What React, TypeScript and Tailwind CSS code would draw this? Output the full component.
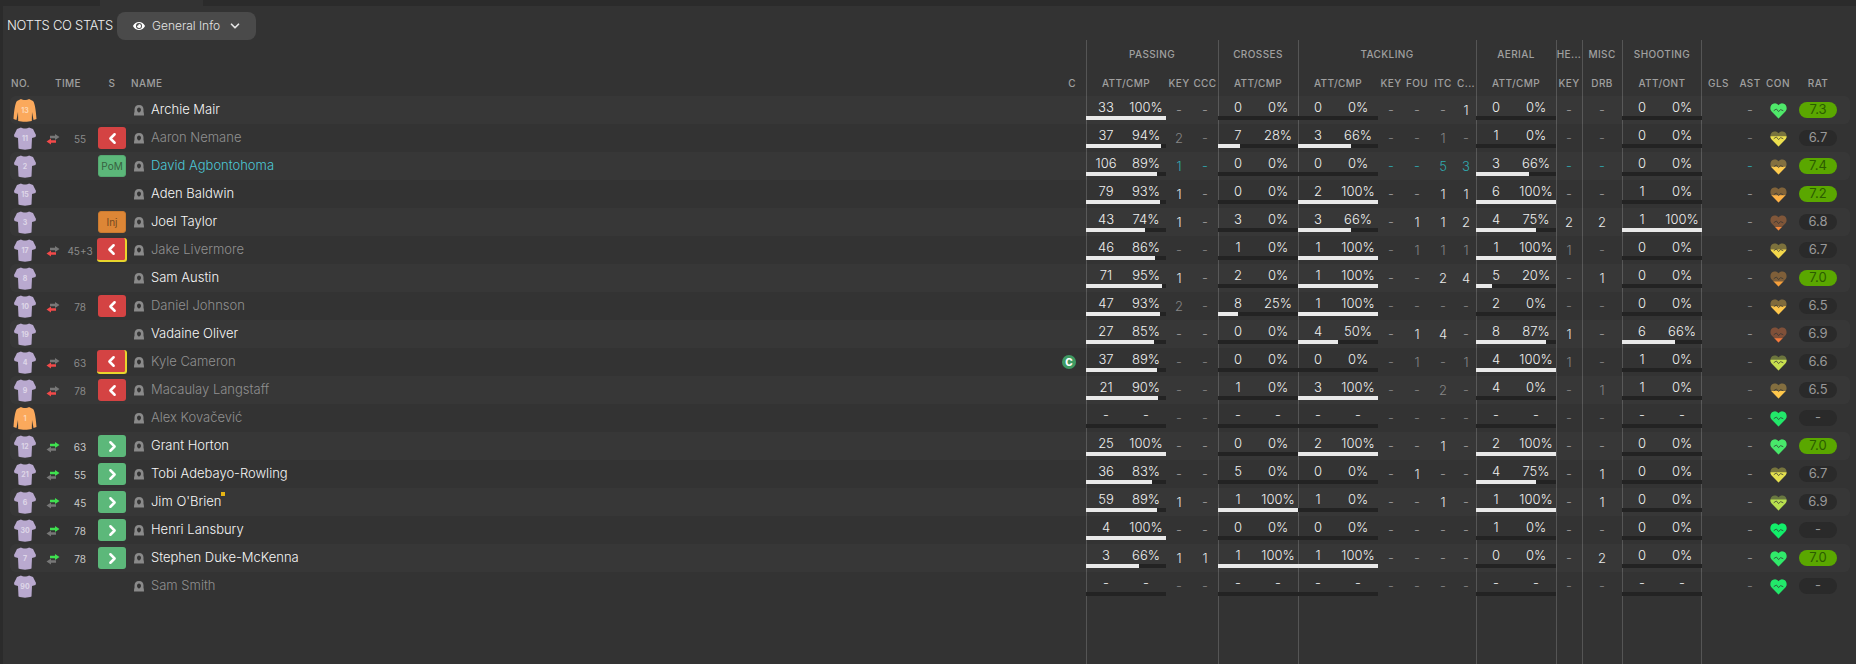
import { FaEye } from "react-icons/fa";
import { FiChevronDown, FiChevronLeft, FiChevronRight } from "react-icons/fi";

const COLS =
  "grid grid-cols-[30px_26px_28px_36px_928px_28px_80px_26px_26px_80px_80px_26px_26px_26px_20px_80px_26px_40px_80px_33px_30px_26px_54px_5px]";

type Pair = [string, string, number];

type Player = {
  no: string;
  name: string;
  gk?: boolean;
  sub?: "out" | "in";
  time?: string;
  badge?: "out" | "outY" | "in" | "pom" | "inj";
  tone?: "dim" | "teal";
  pass: Pair;
  key: string;
  ccc: string;
  cross: Pair;
  tack: Pair;
  tk: [string, string, string, string];
  aer: Pair;
  he: string;
  drb: string;
  sht: Pair;
  heart: [string, number];
  rat: string;
  capt?: boolean;
  dot?: boolean;
};

const p = (a: string, b: string): Pair => [a, b, b === "-" ? 0 : parseInt(b)];
const Z = p("0", "0%");
const N = p("-", "-");

const players: Player[] = [
  { no: "13", name: "Archie Mair", gk: true, pass: p("33", "100%"), key: "-", ccc: "-", cross: Z, tack: Z, tk: ["-", "-", "-", "1"], aer: Z, he: "-", drb: "-", sht: Z, heart: ["#4fe86a", 1], rat: "7.3" },
  { no: "11", name: "Aaron Nemane", sub: "out", time: "55", badge: "out", tone: "dim", pass: p("37", "94%"), key: "2", ccc: "-", cross: p("7", "28%"), tack: p("3", "66%"), tk: ["-", "-", "1", "-"], aer: p("1", "0%"), he: "-", drb: "-", sht: Z, heart: ["#ece04f", 0.68], rat: "6.7" },
  { no: "2", name: "David Agbontohoma", badge: "pom", tone: "teal", pass: p("106", "89%"), key: "1", ccc: "-", cross: Z, tack: Z, tk: ["-", "-", "5", "3"], aer: p("3", "66%"), he: "-", drb: "-", sht: Z, heart: ["#ffcc4f", 0.52], rat: "7.4" },
  { no: "15", name: "Aden Baldwin", pass: p("79", "93%"), key: "1", ccc: "-", cross: Z, tack: p("2", "100%"), tk: ["-", "-", "1", "1"], aer: p("6", "100%"), he: "-", drb: "-", sht: p("1", "0%"), heart: ["#ffb347", 0.48], rat: "7.2" },
  { no: "3", name: "Joel Taylor", badge: "inj", pass: p("43", "74%"), key: "1", ccc: "-", cross: p("3", "0%"), tack: p("3", "66%"), tk: ["-", "1", "1", "2"], aer: p("4", "75%"), he: "2", drb: "2", sht: p("1", "100%"), heart: ["#f58a3c", 0.25], rat: "6.8" },
  { no: "17", name: "Jake Livermore", sub: "out", time: "45+3", badge: "outY", tone: "dim", pass: p("46", "86%"), key: "-", ccc: "-", cross: p("1", "0%"), tack: p("1", "100%"), tk: ["-", "1", "1", "1"], aer: p("1", "100%"), he: "1", drb: "-", sht: Z, heart: ["#f4d84c", 0.6], rat: "6.7" },
  { no: "8", name: "Sam Austin", pass: p("71", "95%"), key: "1", ccc: "-", cross: p("2", "0%"), tack: p("1", "100%"), tk: ["-", "-", "2", "4"], aer: p("5", "20%"), he: "-", drb: "1", sht: Z, heart: ["#f5a03c", 0.35], rat: "7.0" },
  { no: "10", name: "Daniel Johnson", sub: "out", time: "78", badge: "out", tone: "dim", pass: p("47", "93%"), key: "2", ccc: "-", cross: p("8", "25%"), tack: p("1", "100%"), tk: ["-", "-", "-", "-"], aer: p("2", "0%"), he: "-", drb: "-", sht: Z, heart: ["#ffc84c", 0.55], rat: "6.5" },
  { no: "19", name: "Vadaine Oliver", pass: p("27", "85%"), key: "-", ccc: "-", cross: Z, tack: p("4", "50%"), tk: ["-", "1", "4", "-"], aer: p("8", "87%"), he: "1", drb: "-", sht: p("6", "66%"), heart: ["#f57a3c", 0.3], rat: "6.9" },
  { no: "4", name: "Kyle Cameron", sub: "out", time: "63", badge: "outY", tone: "dim", capt: true, pass: p("37", "89%"), key: "-", ccc: "-", cross: Z, tack: Z, tk: ["-", "1", "-", "1"], aer: p("4", "100%"), he: "1", drb: "-", sht: p("1", "0%"), heart: ["#c8e04f", 0.7], rat: "6.6" },
  { no: "9", name: "Macaulay Langstaff", sub: "out", time: "78", badge: "out", tone: "dim", pass: p("21", "90%"), key: "-", ccc: "-", cross: p("1", "0%"), tack: p("3", "100%"), tk: ["-", "-", "2", "-"], aer: p("4", "0%"), he: "-", drb: "1", sht: p("1", "0%"), heart: ["#ffc84c", 0.5], rat: "6.5" },
  { no: "1", name: "Alex Kovačević", gk: true, tone: "dim", pass: N, key: "-", ccc: "-", cross: N, tack: N, tk: ["-", "-", "-", "-"], aer: N, he: "-", drb: "-", sht: N, heart: ["#22e86a", 1], rat: "-" },
  { no: "12", name: "Grant Horton", sub: "in", time: "63", badge: "in", pass: p("25", "100%"), key: "-", ccc: "-", cross: Z, tack: p("2", "100%"), tk: ["-", "-", "1", "-"], aer: p("2", "100%"), he: "-", drb: "-", sht: Z, heart: ["#48e86a", 1], rat: "7.0" },
  { no: "21", name: "Tobi Adebayo-Rowling", sub: "in", time: "55", badge: "in", pass: p("36", "83%"), key: "-", ccc: "-", cross: p("5", "0%"), tack: Z, tk: ["-", "1", "-", "-"], aer: p("4", "75%"), he: "-", drb: "1", sht: Z, heart: ["#e4e04f", 0.68], rat: "6.7" },
  { no: "6", name: "Jim O'Brien", sub: "in", time: "45", badge: "in", dot: true, pass: p("59", "89%"), key: "1", ccc: "-", cross: p("1", "100%"), tack: p("1", "0%"), tk: ["-", "-", "1", "-"], aer: p("1", "100%"), he: "-", drb: "1", sht: Z, heart: ["#b8e04f", 0.72], rat: "6.9" },
  { no: "30", name: "Henri Lansbury", sub: "in", time: "78", badge: "in", pass: p("4", "100%"), key: "-", ccc: "-", cross: Z, tack: Z, tk: ["-", "-", "-", "-"], aer: p("1", "0%"), he: "-", drb: "-", sht: Z, heart: ["#12ee6a", 1], rat: "-" },
  { no: "7", name: "Stephen Duke-McKenna", sub: "in", time: "78", badge: "in", pass: p("3", "66%"), key: "1", ccc: "1", cross: p("1", "100%"), tack: p("1", "100%"), tk: ["-", "-", "-", "-"], aer: Z, he: "-", drb: "2", sht: Z, heart: ["#30ea6a", 1], rat: "7.0" },
  { no: "90", name: "Sam Smith", tone: "dim", pass: N, key: "-", ccc: "-", cross: N, tack: N, tk: ["-", "-", "-", "-"], aer: N, he: "-", drb: "-", sht: N, heart: ["#22e86a", 1], rat: "-" },
];

const Shirt = ({ no, gk }: { no: string; gk?: boolean }) => (
  <svg viewBox="0 0 24 24" className="w-6 h-6">
    {gk ? (
      <path
        fill="#fba95c"
        d="M8 1 C10 2.4 14 2.4 16 1 L20 3 C22 5 23 14 23.5 21 L20.5 22 L19 14 L18.8 23 C15 24 9 24 5.2 23 L5 14 L3.5 22 L0.5 21 C1 14 2 5 4 3 Z"
      />
    ) : (
      <path
        fill="#b9a9cf"
        d="M8 1.5 C10 2.8 14 2.8 16 1.5 L20 3 L23 9 L22.5 11 L19 12 L18.5 22.5 C15 24 9 24 5.5 22.5 L5 12 L1.5 11 L1 9 L4 3 Z"
      />
    )}
    <text
      x="12"
      y="14.5"
      textAnchor="middle"
      fontSize="7"
      fontWeight="700"
      fill="#ffffff"
      fillOpacity="0.55"
      fontFamily="Inter, sans-serif"
    >
      {no}
    </text>
  </svg>
);

const SubArrows = ({ kind }: { kind: "out" | "in" }) => (
  <svg viewBox="0 0 14 11" className="w-[14px] h-[11px]">
    <path fill={kind === "in" ? "#3fe04f" : "#777777"} d="M4 1.8 H9 V0 L13.5 3 L9 6 V4.2 H4 Z" />
    <path fill={kind === "in" ? "#777777" : "#f24a4a"} d="M10 6.3 H5 V4.5 L0.5 7.5 L5 10.5 V8.7 H10 Z" />
  </svg>
);

const Person = () => (
  <svg viewBox="0 0 10 11" className="w-[10px] h-[11px] shrink-0">
    <path
      fill="#8a8a8a"
      fillRule="evenodd"
      d="M5 0 C8 0 9.5 2 9.5 4.5 L9.5 7 C9.9 7.6 10 9 10 10.5 L0 10.5 C0 9 .1 7.6 .5 7 L.5 4.5 C.5 2 2 0 5 0 Z M5 2.4 C3.8 2.4 3 3.4 3 4.8 C3 6.3 3.9 7.4 5 7.4 C6.1 7.4 7 6.3 7 4.8 C7 3.4 6.2 2.4 5 2.4 Z"
    />
  </svg>
);

const Heart = ({ color, level, id }: { color: string; level: number; id: string }) => (
  <svg viewBox="0 0 16 16" className="w-[17px] h-[17px]">
    <defs>
      <clipPath id={id}>
        <rect x="0" y={16 - 15 * level} width="16" height="16" />
      </clipPath>
    </defs>
    <path
      fill={color}
      fillOpacity="0.38"
      d="M8 15.5 L1.4 8.8 C-0.6 6.2 0.4 2 4 1.5 C5.8 1.3 7 2 8 3 C9 2 10.2 1.3 12 1.5 C15.6 2 16.6 6.2 14.6 8.8 Z"
    />
    <path
      fill={color}
      clipPath={`url(#${id})`}
      d="M8 15.5 L1.4 8.8 C-0.6 6.2 0.4 2 4 1.5 C5.8 1.3 7 2 8 3 C9 2 10.2 1.3 12 1.5 C15.6 2 16.6 6.2 14.6 8.8 Z"
    />
    <path fill="none" stroke="#333333" strokeWidth="0.7" d="M3.5 8.2 L6 6.6 L8 9 L10 7.2 L12.5 8.2" />
  </svg>
);

const StatusBadge = ({ kind }: { kind?: Player["badge"] }) => {
  if (!kind) return null;
  if (kind === "pom")
    return (
      <div className="w-7 h-[22px] rounded-[3px] bg-[#5cb87a] border border-[#55a871] flex items-center justify-center text-[10px] text-[#37603f]">
        PoM
      </div>
    );
  if (kind === "inj")
    return (
      <div className="w-7 h-[22px] rounded-[3px] bg-[#dd8636] border border-[#c97a30] flex items-center justify-center text-[10px] text-[#74491f]">
        Inj
      </div>
    );
  if (kind === "in")
    return (
      <div className="w-7 h-[22px] rounded-[3px] bg-[#5cb87a] flex items-center justify-center text-white">
        <FiChevronRight className="w-[17px] h-[17px]" strokeWidth={3.5} />
      </div>
    );
  if (kind === "outY")
    return (
      <div className="w-[30px] h-6 rounded-[3px] bg-[#d44343] border-r-2 border-b-2 border-[#e8d52c] flex items-center justify-center text-white">
        <FiChevronLeft className="w-[17px] h-[17px]" strokeWidth={3.5} />
      </div>
    );
  return (
    <div className="w-7 h-[22px] rounded-[3px] bg-[#d44343] flex items-center justify-center text-white">
      <FiChevronLeft className="w-[17px] h-[17px]" strokeWidth={3.5} />
    </div>
  );
};

const PairCell = ({ v }: { v: Pair }) => (
  <div className="flex flex-col h-7">
    <div className="h-5 pt-[3px] flex items-center text-[13px] font-light text-[#f0f0f0]">
      <span className="w-1/2 text-center">{v[0]}</span>
      <span className="w-1/2 text-center">{v[1]}</span>
    </div>
    <div className="h-1 bg-[#232323]">
      <div className="h-full bg-[#e9e9e9]" style={{ width: `${v[2]}%` }} />
    </div>
  </div>
);

const Small = ({ v, tone }: { v: string; tone?: Player["tone"] }) => {
  const color =
    tone === "teal"
      ? "text-[#2fa9b0]"
      : tone === "dim"
        ? "text-[#858585]"
        : v === "-"
          ? "text-[#a0a0a0]"
          : "text-[#e8e8e8]";
  return <div className={`flex items-center justify-center text-[13px] font-light pt-[2px] ${color}`}>{v}</div>;
};

const Row = ({ pl, i }: { pl: Player; i: number }) => {
  const nameColor =
    pl.tone === "teal" ? "text-[#4cc8d6]" : pl.tone === "dim" ? "text-[#909090]" : "text-[#f6f6f6]";
  const green = Number(pl.rat) >= 7;
  return (
    <div className={`${COLS} relative h-7 rounded-md ${i % 2 === 0 ? "bg-white/[0.025]" : ""}`}>
      <div className="flex items-center justify-center">
        <Shirt no={pl.no} gk={pl.gk} />
      </div>
      <div className="flex items-center justify-center pt-[2px]">{pl.sub && <SubArrows kind={pl.sub} />}</div>
      <div
        className={`flex items-center justify-center text-[10px] pt-[2px] ${pl.sub === "in" ? "text-[#c8c8c8]" : "text-[#8a8a8a]"}`}
      >
        {pl.time}
      </div>
      <div className="flex items-center justify-center">
        <StatusBadge kind={pl.badge} />
      </div>
      <div className="flex items-center gap-[7px] pl-1">
        <Person />
        <span className={`relative text-[13px] font-light ${nameColor}`}>
          {pl.name}
          {pl.dot && <span className="absolute -right-[3px] top-0 w-1 h-1 bg-[#e6b413]" />}
        </span>
      </div>
      <div className="flex items-center justify-center pr-[6px]">
        {pl.capt && (
          <div className="w-[14px] h-[14px] rounded-full bg-[#3f9a63] flex items-center justify-center text-[10px] font-extrabold text-white">
            C
          </div>
        )}
      </div>
      <PairCell v={pl.pass} />
      <Small v={pl.key} tone={pl.tone} />
      <Small v={pl.ccc} tone={pl.tone} />
      <PairCell v={pl.cross} />
      <PairCell v={pl.tack} />
      {pl.tk.map((v, n) => (
        <Small key={n} v={v} tone={pl.tone} />
      ))}
      <PairCell v={pl.aer} />
      <Small v={pl.he} tone={pl.tone} />
      <Small v={pl.drb} tone={pl.tone} />
      <PairCell v={pl.sht} />
      <div />
      <Small v="-" tone={pl.tone} />
      <div className="flex items-center justify-center">
        <Heart color={pl.heart[0]} level={pl.heart[1]} id={`h${i}`} />
      </div>
      <div className="flex items-center justify-center">
        <div
          className={`w-[38px] h-4 rounded-full flex items-center justify-center text-[13px] ${green ? "bg-[#5aa700] text-[#2c5c00]" : "bg-[#2a2a2a] text-[#999999]"}`}
        >
          {pl.rat}
        </div>
      </div>
    </div>
  );
};

const Head = ({ className = "", children }: { className?: string; children?: React.ReactNode }) => (
  <div className={`flex items-center justify-center text-[10px] font-medium tracking-[0.4px] text-[#a0a0a0] ${className}`}>
    {children}
  </div>
);

export default function App() {
  return (
    <div className="h-[664px] w-[1856px] overflow-hidden bg-[#2b2b2b] font-['Inter',sans-serif]">
      <div className="flex h-[6px] pl-[100px]">
        <div className="w-[103px] bg-[#333333]" />
      </div>
      <div className="h-[658px] ml-[3px] bg-[#333333]">
        <div className="flex items-center h-[34px] pt-[6px] pl-1">
          <span className="w-[110px] text-[13px] font-light tracking-[-0.3px] text-[#f0f0f0]">NOTTS CO STATS</span>
          <button className="flex items-center gap-[7px] h-7 w-[139px] pl-4 rounded-lg bg-[#4a4a4a] text-[12px] font-light text-[#e4e4e4]">
            <FaEye className="w-3 h-3 text-white" />
            General Info
            <FiChevronDown className="w-[14px] h-[14px] ml-[1px]" strokeWidth={3} />
          </button>
        </div>

        <div className="relative h-[624px] ml-[7px] w-[1840px]">
          {/* group dividers */}
          <div className={`${COLS} absolute inset-0`}>
            <div className="col-start-7 col-span-3 border-l border-[#555555]" />
            <div className="border-l border-[#555555]" />
            <div className="col-span-5 border-l border-[#555555]" />
            <div className="border-l border-[#555555]" />
            <div className="border-l border-[#555555]" />
            <div className="border-l border-[#555555]" />
            <div className="border-l border-r border-[#555555]" />
          </div>

          <div className={`${COLS} relative h-7 pt-px`}>
            <Head className="col-start-7 col-span-3">PASSING</Head>
            <Head>CROSSES</Head>
            <Head className="col-span-5">TACKLING</Head>
            <Head>AERIAL</Head>
            <Head>HE...</Head>
            <Head>MISC</Head>
            <Head>SHOOTING</Head>
          </div>
          <div className={`${COLS} relative h-7 pt-[3px]`}>
            <Head className="justify-start! pl-px">NO.</Head>
            <Head className="col-span-2 ml-[2px]">TIME</Head>
            <Head>S</Head>
            <Head className="justify-start! pl-px">NAME</Head>
            <Head>C</Head>
            <Head>ATT/CMP</Head>
            <Head>KEY</Head>
            <Head>CCC</Head>
            <Head>ATT/CMP</Head>
            <Head>ATT/CMP</Head>
            <Head>KEY</Head>
            <Head>FOU</Head>
            <Head>ITC</Head>
            <Head>C...</Head>
            <Head>ATT/CMP</Head>
            <Head>KEY</Head>
            <Head>DRB</Head>
            <Head>ATT/ONT</Head>
            <Head>GLS</Head>
            <Head>AST</Head>
            <Head>CON</Head>
            <Head>RAT</Head>
          </div>

          {players.map((pl, i) => (
            <Row key={pl.no} pl={pl} i={i} />
          ))}
        </div>
      </div>
    </div>
  );
}
